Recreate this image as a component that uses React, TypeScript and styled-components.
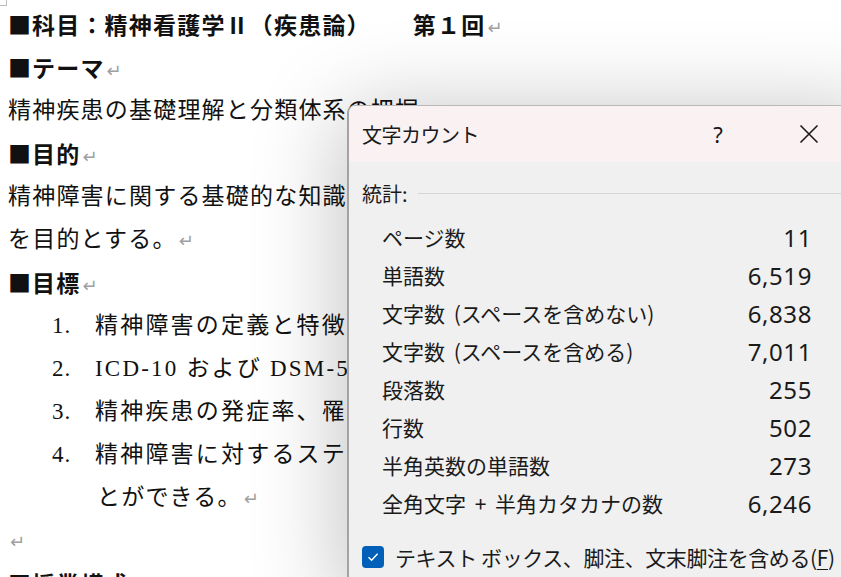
import styled, { createGlobalStyle } from "styled-components";

const Global = createGlobalStyle`
  html, body {
    margin: 0;
    padding: 0;
    background: #fff;
    overflow: hidden;
  }
`;

const Screen = styled.div`
  position: relative;
  width: 841px;
  height: 577px;
  overflow: hidden;
  background: #fff;
`;

const Doc = styled.div`
  position: relative;
  padding: 3px 0 0 8px;
  font-family: "Liberation Serif", "Noto Sans CJK JP", serif;
  font-size: 23px;
  letter-spacing: 1.2px;
  color: #111;

  &::before {
    content: "";
    position: absolute;
    left: 0;
    top: 0;
    width: 6px;
    height: 5px;
    border-right: 1px solid #bdbdbd;
    border-bottom: 1px solid #bdbdbd;
  }
`;

const Line = styled.div<{ $bold?: boolean; $indent?: number }>`
  height: 43px;
  line-height: 43px;
  white-space: nowrap;
  font-weight: ${(p) => (p.$bold ? 700 : 400)};
  padding-left: ${(p) => p.$indent ?? 0}px;
`;

const Square = styled.span`
  font-family: "Noto Sans CJK JP", sans-serif;
  letter-spacing: 0;
  margin-right: 1px;
`;

const ListItem = styled.div`
  display: flex;
  height: 43px;
  line-height: 43px;
  white-space: nowrap;
  padding-left: 44px;
  letter-spacing: 2.2px;
`;

const Num = styled.span`
  width: 43px;
  flex: none;
  letter-spacing: 1px;
`;

const Mark = styled.span`
  font-family: "DejaVu Sans", sans-serif;
  font-size: 18px;
  font-weight: 400;
  color: #a0a0a0;
  letter-spacing: 0;
  margin-left: 2px;
`;

const Gap = styled.span`
  display: inline-block;
  width: 42px;
`;

/* ---------- dialog ---------- */

const Dialog = styled.div`
  position: absolute;
  left: 347px;
  top: 105px;
  width: 540px;
  height: 500px;
  border-left: 2px solid #a3a3a3;
  border-top: 1px solid #b8b8b8;
  border-radius: 8px 0 0 0;
  overflow: hidden;
  background: #f0f0f0;
  box-shadow: -6px 6px 90px rgba(0, 0, 0, 0.24);
  font-family: "Noto Sans CJK JP", "Noto Sans", sans-serif;
  color: #1a1a1a;
`;

const TitleBar = styled.div`
  display: flex;
  align-items: center;
  height: 56px;
  background: #f9f1f2;
  padding: 0 57px 0 13px;
`;

const Title = styled.div`
  flex: 1;
  font-size: 20px;
  letter-spacing: -0.5px;
`;

const TitleButton = styled.div<{ $w: number; $ml?: number }>`
  width: ${(p) => p.$w}px;
  margin-left: ${(p) => p.$ml ?? 0}px;
  display: flex;
  justify-content: center;
  align-items: center;
  font-size: 22px;
  font-family: "Noto Sans", sans-serif;
`;

const Body = styled.div`
  padding: 13px 0 0 13px;
`;

const GroupHead = styled.div`
  display: flex;
  align-items: center;
  height: 36px;
  font-size: 20px;

  &::after {
    content: "";
    flex: 1;
    height: 1px;
    background: #d6d6d6;
    margin-left: 10px;
  }
`;

const Stats = styled.div`
  display: grid;
  grid-template-columns: 1fr auto;
  grid-auto-rows: 38px;
  align-items: center;
  padding: 4px 77px 0 20px;
  margin-top: 3px;
`;

const Label = styled.div`
  font-size: 21px;
  word-spacing: 4px;
  white-space: nowrap;
`;

const Value = styled.div`
  font-family: "Noto Sans", sans-serif;
  font-size: 24px;
  letter-spacing: 0.6px;
  text-align: right;
`;

const CheckRow = styled.label`
  display: flex;
  align-items: center;
  gap: 11px;
  margin-top: 20px;
  font-size: 21px;
  letter-spacing: -0.4px;
  white-space: nowrap;

  u {
    text-decoration-thickness: 1px;
    text-underline-offset: 3px;
  }
`;

const Box = styled.span`
  width: 22px;
  height: 22px;
  border-radius: 4px;
  background: #005fb8;
  display: flex;
  align-items: center;
  justify-content: center;
  flex: none;
`;

const stats = [
  ["ページ数", "11"],
  ["単語数", "6,519"],
  ["文字数 (スペースを含めない)", "6,838"],
  ["文字数 (スペースを含める)", "7,011"],
  ["段落数", "255"],
  ["行数", "502"],
  ["半角英数の単語数", "273"],
  ["全角文字 + 半角カタカナの数", "6,246"],
];

const Ret = () => <Mark>↵</Mark>;
const Sq = () => <Square>■</Square>;

export default function App() {
  return (
    <Screen>
      <Global />
      <Doc>
        <Line $bold>
          <Sq />科目：精神看護学Ⅱ（疾患論）<Gap />第１回<Ret />
        </Line>
        <Line $bold>
          <Sq />テーマ<Ret />
        </Line>
        <Line>精神疾患の基礎理解と分類体系の把握</Line>
        <Line $bold>
          <Sq />目的<Ret />
        </Line>
        <Line>精神障害に関する基礎的な知識を習得し、主要な精神疾患の分類体系を理解すること</Line>
        <Line>
          を目的とする。<Ret />
        </Line>
        <Line $bold>
          <Sq />目標<Ret />
        </Line>
        <ListItem>
          <Num>1.</Num>精神障害の定義と特徴を説明できる。
        </ListItem>
        <ListItem>
          <Num>2.</Num>ICD-10 および DSM-5 の分類体系を理解できる。
        </ListItem>
        <ListItem>
          <Num>3.</Num>精神疾患の発症率、罹患率について説明できる。
        </ListItem>
        <ListItem>
          <Num>4.</Num>精神障害に対するスティグマの問題について考えるこ
        </ListItem>
        <Line $indent={89}>
          とができる。<Ret />
        </Line>
        <Line>
          <Ret />
        </Line>
        <Line $bold>
          <Sq />授業構成
        </Line>
      </Doc>

      <Dialog>
        <TitleBar>
          <Title>文字カウント</Title>
          <TitleButton $w={40}>?</TitleButton>
          <TitleButton $w={46} $ml={48}>
            <svg width="20" height="20" viewBox="0 0 20 20">
              <path d="M1.5 1.5 L18.5 18.5 M18.5 1.5 L1.5 18.5" stroke="#1a1a1a" strokeWidth="1.6" fill="none" />
            </svg>
          </TitleButton>
        </TitleBar>
        <Body>
          <GroupHead>統計:</GroupHead>
          <Stats>
            {stats.map(([k, v]) => [
              <Label key={k}>{k}</Label>,
              <Value key={k + "v"}>{v}</Value>,
            ])}
          </Stats>
          <CheckRow>
            <Box>
              <svg width="14" height="14" viewBox="0 0 14 14">
                <path d="M2.5 7.3 L5.6 10.3 L11.6 3.8" stroke="#fff" strokeWidth="1.5" fill="none" />
              </svg>
            </Box>
            <span>
              テキスト ボックス、脚注、文末脚注を含める(<u>F</u>)
            </span>
          </CheckRow>
        </Body>
      </Dialog>
    </Screen>
  );
}
